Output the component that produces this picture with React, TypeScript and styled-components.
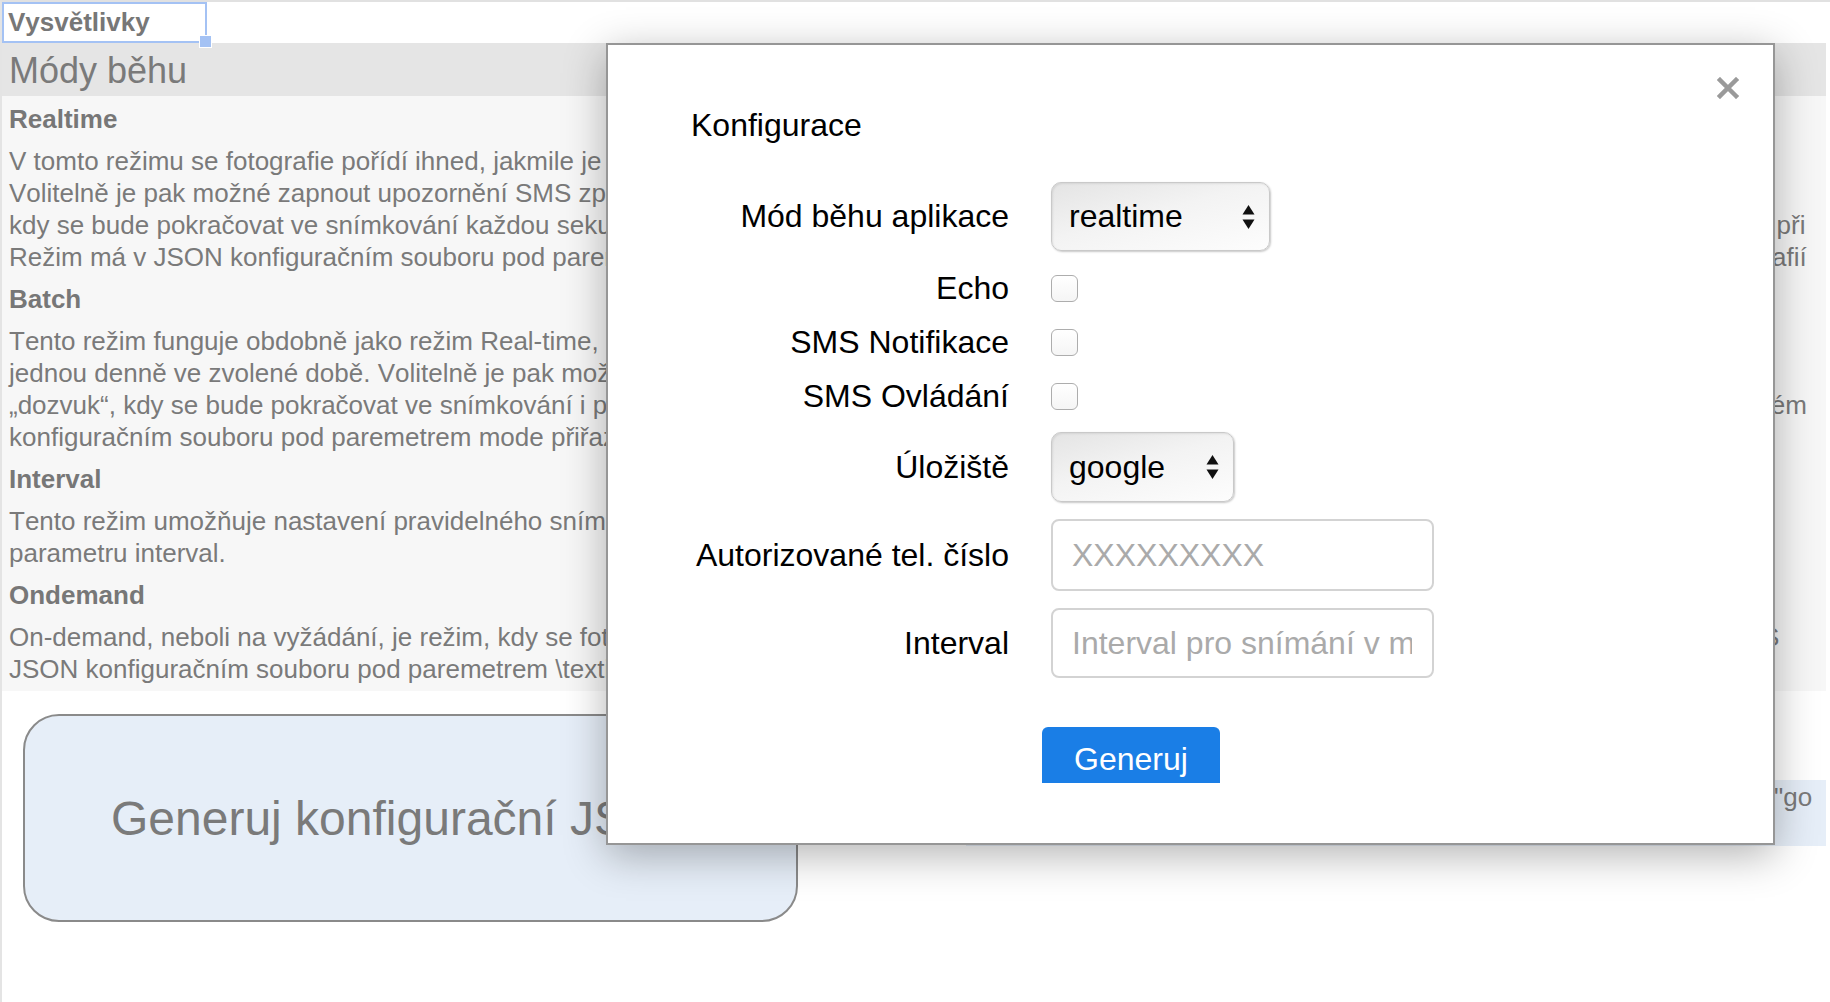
import React from "react";
import styled, { createGlobalStyle } from "styled-components";

const GlobalStyle = createGlobalStyle`
  html, body {
    margin: 0;
    padding: 0;
    background: #fff;
  }
  body {
    font-family: "Liberation Sans", Arial, Helvetica, sans-serif;
    font-kerning: none;
  }
  * {
    box-sizing: border-box;
  }
`;

const modes = [
  {
    title: "Realtime",
    lines: [
      "V tomto režimu se fotografie pořídí ihned, jakmile je detekován pohyb, a okamžitě se nahraje na zvolené úložiště.",
      "Volitelně je pak možné zapnout upozornění SMS zprávou o každé nové fotografii a také takzvaný „dozvuk“,",
      "kdy se bude pokračovat ve snímkování každou sekundu po dobu nastavenou v konfiguraci, kterou lze změnit dle libosti a to i v případě, že pohyb ustane, při",
      "Režim má v JSON konfiguračním souboru pod paremetrem mode přiřazenou hodnotu realtime. Je určen pro okamžité sledování, a rychlé doručení fotografií",
    ],
  },
  {
    title: "Batch",
    lines: [
      "Tento režim funguje obdobně jako režim Real-time, ale fotografie se neodesílají ihned, nýbrž se ukládají a nahrají se",
      "jednou denně ve zvolené době. Volitelně je pak možné zapnout upozornění SMS zprávou a také takzvaný",
      "„dozvuk“, kdy se bude pokračovat ve snímkování i po skončení pohybu, takže se zachytí doznívající dění. Vše zároveň. Tento režim se nastaví v příslušném",
      "konfiguračním souboru pod paremetrem mode přiřazenou hodnotu batch a čas odeslání pod parametrem time.",
    ],
  },
  {
    title: "Interval",
    lines: [
      "Tento režim umožňuje nastavení pravidelného snímkování v pevně daném časovém intervalu, který se nastavuje pomocí",
      "parametru interval.",
    ],
  },
  {
    title: "Ondemand",
    lines: [
      "On-demand, neboli na vyžádání, je režim, kdy se fotografie pořídí výhradně na základě příkazu, který uživatel odešle na zařízení s kamerou, pomocí SMS",
      "JSON konfiguračním souboru pod paremetrem \\textit{mode} přiřazenou hodnotu ondemand.",
    ],
  },
];

const Page = styled.div`
  position: relative;
  min-height: 1002px;
  border-top: 2px solid #e1e1e1;
  border-left: 2px solid #e4e4e4;
  padding-right: 4px;
  overflow: hidden;
`;

const CellRow = styled.div`
  height: 41px;
`;

const SelectedCell = styled.div`
  position: relative;
  width: 205px;
  height: 41px;
  border: 2px solid #a4c2f4;
  padding-left: 4px;
  font-size: 26px;
  font-weight: bold;
  line-height: 37px;
  color: #777;

  &::after {
    content: "";
    position: absolute;
    right: -7px;
    bottom: -7px;
    width: 11px;
    height: 11px;
    background: #a4c2f4;
    border: 1px solid #fff;
  }
`;

const SectionHeader = styled.div`
  height: 53px;
  background: #e5e5e5;
  padding: 3px 0 0 7px;
  font-size: 36px;
  line-height: 50px;
  color: #7a7a7a;
`;

const Content = styled.div`
  background: #f7f7f7;
  padding: 7px 7px 6px;
`;

const ModeTitle = styled.h3`
  margin: 0 0 10px;
  font-size: 26px;
  font-weight: bold;
  line-height: 32px;
  color: #777;
`;

const ModeText = styled.p`
  margin: 0 0 10px;
  font-size: 26px;
  line-height: 32px;
  color: #7a7a7a;
  white-space: nowrap;

  &:last-child {
    margin-bottom: 0;
  }
`;

const ActionRow = styled.div`
  display: flex;
  align-items: flex-start;
  padding: 23px 0 0 21px;
`;

const BigButton = styled.div`
  width: 775px;
  height: 208px;
  display: flex;
  align-items: center;
  justify-content: center;
  padding-right: 12px;
  background: #e6eef8;
  border: 2px solid #8a8a8a;
  border-radius: 36px;
  font-size: 48px;
  color: #7a7a7a;
`;

const JsonOutput = styled.div`
  margin-left: auto;
  margin-top: 66px;
  width: 860px;
  padding: 1px 7px 1px 18px;
  background: #e6eef8;
  font-size: 26px;
  line-height: 32px;
  color: #7a7a7a;
  word-break: break-all;
`;

const Modal = styled.div`
  position: absolute;
  left: 604px;
  top: 41px;
  width: 1169px;
  height: 802px;
  background: #fff;
  border: 2px solid #969696;
  box-shadow: 0 10px 40px rgba(0, 0, 0, 0.3);
`;

const CloseButton = styled.div`
  position: absolute;
  top: 32px;
  right: 34px;
  width: 22px;
  height: 22px;
  display: flex;
`;

const Frame = styled.div`
  height: 738px;
  overflow: hidden;
  padding: 62px 0 0 83px;
`;

const Title = styled.h4`
  margin: 0;
  font-size: 32px;
  font-weight: normal;
  line-height: 37px;
  color: #000;
`;

const Form = styled.div`
  margin-top: 38px;
  display: flex;
  flex-direction: column;
`;

const FieldRow = styled.div<{ $height: number; $space?: number }>`
  display: grid;
  grid-template-columns: 318px 1fr;
  column-gap: 42px;
  align-items: center;
  height: ${(p) => p.$height}px;
  margin-top: ${(p) => p.$space ?? 0}px;
`;

const Label = styled.label`
  text-align: right;
  font-size: 32px;
  line-height: 37px;
  color: #000;
  white-space: nowrap;
`;

const SelectBox = styled.div<{ $width: number; $height: number }>`
  width: ${(p) => p.$width}px;
  height: ${(p) => p.$height}px;
  display: flex;
  align-items: center;
  justify-content: space-between;
  padding: 0 14px 0 17px;
  border: 1px solid #c9c9c9;
  border-radius: 10px;
  background: linear-gradient(165deg, #e4e4e4 0%, #f3f3f3 45%, #fdfdfd 100%);
  box-shadow: inset 1px 1px 2px rgba(0, 0, 0, 0.08), 1px 1px 2px rgba(0, 0, 0, 0.22);
  font-size: 32px;
  color: #000;
`;

const Checkbox = styled.input`
  appearance: none;
  margin: 0;
  width: 27px;
  height: 27px;
  border: 1px solid #adadad;
  border-radius: 6px;
  background: linear-gradient(#ffffff, #f5f5f5);
`;

const TextInput = styled.input<{ $height: number }>`
  width: 383px;
  height: ${(p) => p.$height}px;
  margin: 0;
  padding: 0 20px 0 19px;
  border: 2px solid #d3d3d3;
  border-radius: 8px;
  background: #fff;
  font-family: "Liberation Sans", Arial, sans-serif;
  font-size: 32px;
  color: #000;
  outline: none;

  &::placeholder {
    color: #aaa;
  }
`;

const SubmitButton = styled.button`
  grid-column: 2;
  margin-left: -9px;
  width: 178px;
  height: 64px;
  border: none;
  border-radius: 6px;
  background: #1a7ee6;
  color: #fff;
  font-family: "Liberation Sans", Arial, sans-serif;
  font-size: 32px;
`;

const Arrows = () => (
  <svg width="13" height="28" viewBox="0 0 13 28" aria-hidden="true">
    <path d="M6.5 2 L12.5 11.5 L0.5 11.5 Z" fill="#111" />
    <path d="M0.5 16.5 L12.5 16.5 L6.5 26 Z" fill="#111" />
  </svg>
);

const CloseIcon = () => (
  <svg width="22" height="22" viewBox="0 0 22 22" aria-hidden="true">
    <path d="M3 3 L19 19 M19 3 L3 19" stroke="#9a9a9a" strokeWidth="4.5" strokeLinecap="square" />
  </svg>
);

const App: React.FC = () => {
  return (
    <>
      <GlobalStyle />
      <Page>
        <CellRow>
          <SelectedCell>Vysvětlivky</SelectedCell>
        </CellRow>
        <SectionHeader>Módy běhu</SectionHeader>
        <Content>
          {modes.map(({ title, lines }) => (
            <React.Fragment key={title}>
              <ModeTitle>{title}</ModeTitle>
              <ModeText>
                {lines.map((line, i) => (
                  <React.Fragment key={i}>
                    {i > 0 && <br />}
                    {line}
                  </React.Fragment>
                ))}
              </ModeText>
            </React.Fragment>
          ))}
        </Content>
        <ActionRow>
          <BigButton>Generuj konfigurační JSON</BigButton>
          <JsonOutput>
            {'{"mode":"realtime","echo":false,"notify":false,"control":false,"storage":"google","phone":"","interval":""}'}
          </JsonOutput>
        </ActionRow>

        <Modal>
          <CloseButton>
            <CloseIcon />
          </CloseButton>
          <Frame>
            <Title>Konfigurace</Title>
            <Form>
              <FieldRow $height={69}>
                <Label>Mód běhu aplikace</Label>
                <SelectBox $width={219} $height={69}>
                  realtime
                  <Arrows />
                </SelectBox>
              </FieldRow>
              <FieldRow $height={46} $space={14}>
                <Label>Echo</Label>
                <Checkbox type="checkbox" />
              </FieldRow>
              <FieldRow $height={46} $space={8}>
                <Label>SMS Notifikace</Label>
                <Checkbox type="checkbox" />
              </FieldRow>
              <FieldRow $height={46} $space={8}>
                <Label>SMS Ovládání</Label>
                <Checkbox type="checkbox" />
              </FieldRow>
              <FieldRow $height={70} $space={13}>
                <Label>Úložiště</Label>
                <SelectBox $width={183} $height={70}>
                  google
                  <Arrows />
                </SelectBox>
              </FieldRow>
              <FieldRow $height={72} $space={17}>
                <Label>Autorizované tel. číslo</Label>
                <TextInput $height={72} placeholder="XXXXXXXXX" />
              </FieldRow>
              <FieldRow $height={70} $space={17}>
                <Label>Interval</Label>
                <TextInput $height={70} placeholder="Interval pro snímání v minutách" />
              </FieldRow>
              <FieldRow $height={64} $space={49}>
                <SubmitButton>Generuj</SubmitButton>
              </FieldRow>
            </Form>
          </Frame>
        </Modal>
      </Page>
    </>
  );
};

export default App;
